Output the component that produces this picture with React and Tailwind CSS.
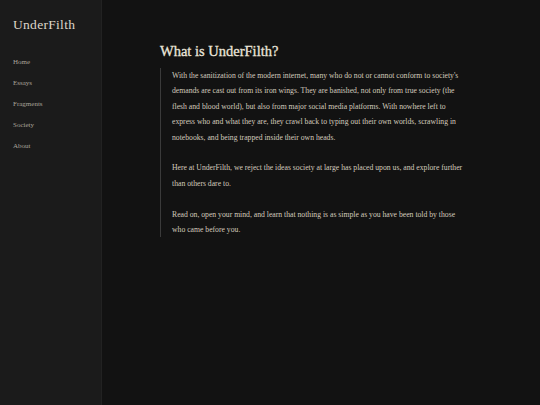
export default function App() {
  const nav = ['Home', 'Essays', 'Fragments', 'Society', 'About']
  return (
    <div className="flex min-h-[405px] w-full bg-[#121212]" style={{ fontFamily: '"Liberation Serif", serif' }}>
      <aside className="w-[102px] shrink-0 bg-[#1b1b1b] border-r border-[#222222] px-[13px] pt-[16px]">
        <h1 className="text-[13.5px] leading-[18px] text-[#ddd6ca] tracking-[0.3px]">UnderFilth</h1>
        <nav className="mt-[23px] flex flex-col gap-[11px]">
          {nav.map(n => (
            <a key={n} className="text-[7px] leading-[10px] text-[#a9a39a]">{n}</a>
          ))}
        </nav>
      </aside>
      <main className="flex-1 pl-[58px] pt-[41px] pr-[60px]">
        <h2 className="text-[14.5px] leading-[20px] font-normal [-webkit-text-stroke:0.3px_#ebe5da] text-[#ebe5da]">What is UnderFilth?</h2>
        <div className="mt-[7px] border-l border-[#3a3a3a] pl-[11px] pb-[0px] w-[303px] text-[7.7px] leading-[15.4px] text-[#d2cabd]">
          <p>
            With the sanitization of the modern internet, many who do not or cannot conform to society's demands are cast out from its iron wings. They are banished, not only from true society (the flesh and blood world), but also from major social media platforms. With nowhere left to express who and what they are, they crawl back to typing out their own worlds, scrawling in notebooks, and being trapped inside their own heads.
          </p>
          <p className="mt-[15.4px]">
            Here at UnderFilth, we reject the ideas society at large has placed upon us, and explore further than others dare to.
          </p>
          <p className="mt-[15.4px]">
            Read on, open your mind, and learn that nothing is as simple as you have been told by those who came before you.
          </p>
        </div>
      </main>
    </div>
  )
}
